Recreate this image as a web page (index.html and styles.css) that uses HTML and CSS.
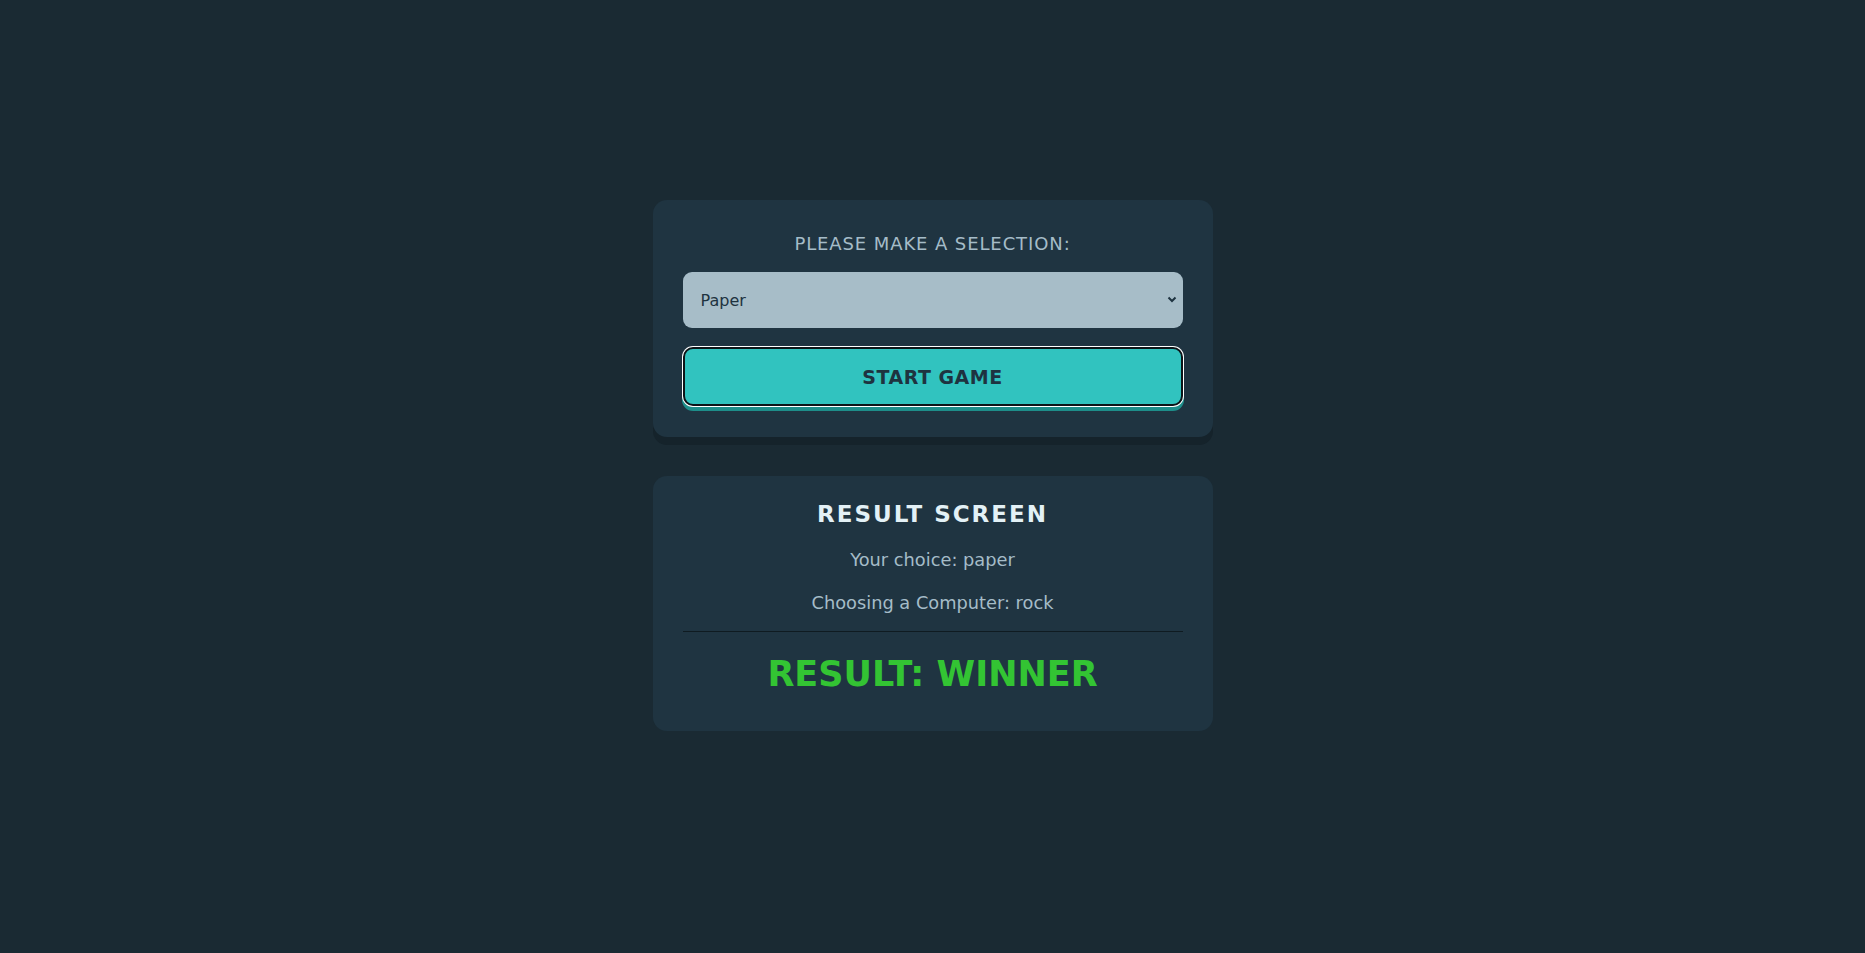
FILE: index.html
```html
<!DOCTYPE html>
<html lang="en">
<head>
<meta charset="utf-8">
<title>Rock Paper Scissors</title>
<link rel="stylesheet" href="styles.css">
</head>
<body>
<main class="page">
  <section class="card card-select">
    <label class="label" for="choice">PLEASE MAKE A SELECTION:</label>
    <div class="select-wrap">
      <select id="choice" class="select">
        <option>Rock</option>
        <option selected>Paper</option>
        <option>Scissors</option>
      </select>
      <svg class="chevron" width="10" height="7" viewBox="0 0 10 7"><path d="M1.5 1.5 L5 5 L8.5 1.5" fill="none" stroke="#1e3340" stroke-width="2"/></svg>
    </div>
    <button class="start">START GAME</button>
  </section>
  <section class="card card-result">
    <h2 class="title">RESULT SCREEN</h2>
    <p class="line">Your choice: paper</p>
    <p class="line line-2">Choosing a Computer: rock</p>
    <hr class="divider">
    <p class="outcome">RESULT: WINNER</p>
  </section>
</main>
</body>
</html>
```
FILE: styles.css
```css
html, body {
  margin: 0;
  padding: 0;
  background: #1a2a33;
}
body {
  font-family: "Comic Sans MS", "DejaVu Sans", sans-serif;
}
.page {
  display: flex;
  flex-direction: column;
  align-items: center;
  padding-top: 200px;
}
.card {
  box-sizing: border-box;
  width: 560px;
  background: #1f3441;
  border-radius: 14px;
  padding: 0 30px;
  display: flex;
  flex-direction: column;
  align-items: stretch;
}
.card-select {
  padding-top: 30px;
  padding-bottom: 31px;
  box-shadow: 0 8px 0 #15232b;
}
.label {
  text-align: center;
  color: #a5bcc8;
  font-size: 18px;
  line-height: 28px;
  letter-spacing: 0.9px;
}
.select-wrap {
  position: relative;
  margin-top: 14px;
}
.select {
  appearance: none;
  -webkit-appearance: none;
  width: 100%;
  height: 56px;
  box-sizing: border-box;
  border: none;
  border-radius: 9px;
  background: #a7bdc8;
  color: #1e3340;
  font-family: inherit;
  font-size: 16px;
  padding: 0 18px;
  outline: none;
}
.chevron {
  position: absolute;
  right: 6px;
  top: 24px;
  pointer-events: none;
}
.start {
  margin-top: 19px;
  height: 59px;
  border: 2px solid #0d1418;
  border-radius: 10px;
  background: #31c3bf;
  color: #1e3340;
  font-family: inherit;
  font-weight: bold;
  font-size: 19px;
  letter-spacing: 0.5px;
  box-shadow: 0 0 0 1px #ffffff, 0 4px 0 1px #1d8e8a;
  cursor: pointer;
}
.card-result {
  margin-top: 39px;
  padding-top: 21px;
  padding-bottom: 32px;
  text-align: center;
}
.title {
  margin: 0;
  color: #e3f1f6;
  font-size: 23px;
  font-weight: bold;
  line-height: 34px;
  letter-spacing: 2px;
}
.line {
  margin: 16px 0 0;
  color: #a5bcc8;
  font-size: 17.8px;
  line-height: 26px;
}
.line-2 {
  margin-top: 17px;
}
.divider {
  margin: 15px 0 0;
  border: none;
  height: 1px;
  background: #0f1b21;
}
.outcome {
  margin: 17px 0 0;
  color: #33c433;
  font-size: 35px;
  font-weight: bold;
  line-height: 50px;
}
```
